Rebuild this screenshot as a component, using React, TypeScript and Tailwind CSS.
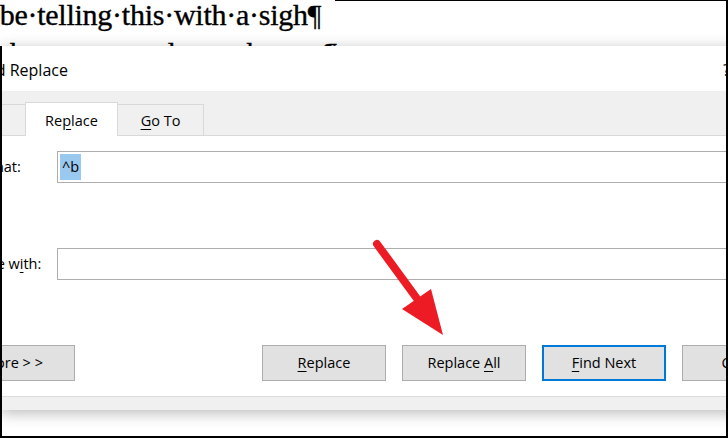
import React from "react";

const ui = { fontFamily: '"Open Sans", "Noto Sans", sans-serif' };
const doc = { fontFamily: '"Liberation Serif", "DejaVu Serif", serif' };

function U({ children }: { children: React.ReactNode }) {
  return <span className="underline underline-offset-[3px] decoration-[1px]">{children}</span>;
}

function Btn({ children, active, className = "" }: { children: React.ReactNode; active?: boolean; className?: string }) {
  return (
    <div
      className={`w-[124px] h-[36px] shrink-0 flex items-center justify-center bg-[#e1e1e1] text-[14.5px] text-black ${
        active ? "border-2 border-[#0078d7]" : "border border-[#adadad]"
      } ${className}`}
    >
      <span className="whitespace-pre">{children}</span>
    </div>
  );
}

export default function App() {
  return (
    <div className="relative w-[728px] h-[438px] overflow-hidden bg-white" style={ui}>
      {/* document behind the dialog */}
      <div
        className="h-[50px] mt-[-4px] ml-[-85px] whitespace-nowrap text-[30px] leading-[38px] tracking-[-0.25px] text-black [-webkit-text-stroke:0.35px_black]"
        style={doc}
      >
        <div>I·shall·be·telling·this·with·a·sigh¶</div>
        <div className="ml-[6px]">Somewhere·ages·and·ages·hence:¶</div>
      </div>

      {/* dialog */}
      <div className="relative w-[800px] bg-white shadow-[0_3px_14px_rgba(0,0,0,0.28)]">
        <div className="h-[45px] flex items-center pt-[3px] text-[16px] text-black">
          <span className="ml-[-59px] whitespace-nowrap">Find and Replace</span>
          <span className="ml-auto mr-[70px] text-[#222]">?</span>
        </div>

        <div className="h-[45px] flex items-end bg-[#f0f0f0] text-[14.5px] text-black">
          <div className="ml-[-60px] w-[85px] h-[32px] shrink-0 border-t border-l border-b border-[#d9d9d9]" />
          <div className="w-[93px] h-[34px] shrink-0 flex items-center justify-center bg-white border-t border-x border-[#d9d9d9] pt-[2px]">
            <span>
              Re<U>p</U>lace
            </span>
          </div>
          <div className="w-[86px] h-[32px] shrink-0 flex items-center justify-center border-t border-r border-b border-[#d9d9d9] pt-[2px]">
            <span>
              <U>G</U>o To
            </span>
          </div>
          <div className="flex-1 border-b border-[#d9d9d9]" />
        </div>

        <div className="pt-[15px] pb-[15px] text-[14.5px] text-black">
          <div className="flex items-center h-[32px]">
            <span className="ml-[-49px] w-[106px] shrink-0 whitespace-nowrap">Find what:</span>
            <div className="flex-1 h-[32px] border border-[#adadad] flex items-center pl-[2px]">
              <span className="bg-[#99c9ef] h-[26px] px-[2px] flex items-center">^b</span>
            </div>
          </div>
          <div className="flex items-center h-[32px] mt-[65px]">
            <span className="ml-[-48px] w-[105px] shrink-0 whitespace-nowrap">
              Replace w<U>i</U>th:
            </span>
            <div className="flex-1 h-[32px] border border-[#adadad]" />
          </div>
          <div className="flex items-center gap-4 mt-[65px]">
            <Btn className="ml-[-49px]">
              <U>M</U>ore &gt; &gt;
            </Btn>
            <Btn className="ml-[171px]">
              <U>R</U>eplace
            </Btn>
            <Btn>
              Replace <U>A</U>ll
            </Btn>
            <Btn active>
              <U>F</U>ind Next
            </Btn>
            <Btn>Cancel</Btn>
          </div>
        </div>

        <div className="h-[14px] border-t border-[#dcdcdc] bg-[#f0f0f0]" />
      </div>

      {/* red annotation arrow */}
      <svg className="absolute left-0 top-0" width="728" height="438" viewBox="0 0 728 438">
        <line x1="377" y1="244" x2="418" y2="300" stroke="#ed1c24" strokeWidth="8" strokeLinecap="round" />
        <polygon points="402,309 431,289 443,335" fill="#ed1c24" />
      </svg>

      {/* screenshot frame */}
      <div className="absolute left-[335px] right-0 top-0 h-px bg-black" />
      <div className="absolute right-0 top-0 bottom-0 w-[2px] bg-black" />
      <div className="absolute left-0 top-[46px] bottom-0 w-[2px] bg-black" />
      <div className="absolute left-0 right-0 bottom-0 h-[2px] bg-black" />
    </div>
  );
}
